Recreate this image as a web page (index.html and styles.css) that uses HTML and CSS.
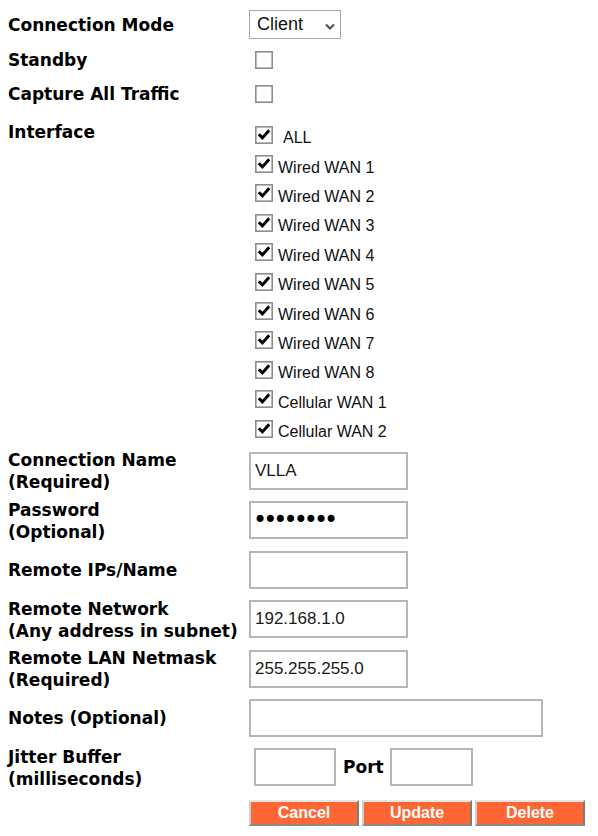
FILE: index.html
```html
<!DOCTYPE html>
<html lang="en">
<head>
<meta charset="utf-8">
<title>Connection Settings</title>
<link rel="stylesheet" href="styles.css">
</head>
<body>
<form class="vpn-form">
  <div class="row r-mode">
    <label class="lbl" for="mode">Connection Mode</label>
    <span class="select-wrap">
      <select id="mode" class="select"><option>Client</option><option>Server</option></select>
      <svg class="chev" viewBox="0 0 10 7" aria-hidden="true"><polyline points="1,1.5 5,5.5 9,1.5" fill="none" stroke="#555" stroke-width="2.2"/></svg>
    </span>
  </div>

  <div class="row r-standby">
    <span class="lbl">Standby</span>
    <span class="ctl-cb"><svg class="cb" viewBox="0 0 18 18"><rect x="0.8" y="0.8" width="16.4" height="16.4" fill="#fff" stroke="#8c8c8c" stroke-width="1.6"/></svg></span>
  </div>

  <div class="row r-capture">
    <span class="lbl">Capture All Traffic</span>
    <span class="ctl-cb"><svg class="cb" viewBox="0 0 18 18"><rect x="0.8" y="0.8" width="16.4" height="16.4" fill="#fff" stroke="#8c8c8c" stroke-width="1.6"/></svg></span>
  </div>

  <div class="row r-iface">
    <span class="lbl">Interface</span>
    <ul class="cb-list">
      <li class="cb-item"><svg class="cb" viewBox="0 0 18 18"><rect x="0.8" y="0.8" width="16.4" height="16.4" fill="#fff" stroke="#8c8c8c" stroke-width="1.6"/><path d="M3.8 8.2 L7.4 11.9 L14.2 4.2" fill="none" stroke="#000" stroke-width="3"/></svg><span class="txt txt-all">ALL</span></li>
      <li class="cb-item"><svg class="cb" viewBox="0 0 18 18"><rect x="0.8" y="0.8" width="16.4" height="16.4" fill="#fff" stroke="#8c8c8c" stroke-width="1.6"/><path d="M3.8 8.2 L7.4 11.9 L14.2 4.2" fill="none" stroke="#000" stroke-width="3"/></svg><span class="txt">Wired WAN 1</span></li>
      <li class="cb-item"><svg class="cb" viewBox="0 0 18 18"><rect x="0.8" y="0.8" width="16.4" height="16.4" fill="#fff" stroke="#8c8c8c" stroke-width="1.6"/><path d="M3.8 8.2 L7.4 11.9 L14.2 4.2" fill="none" stroke="#000" stroke-width="3"/></svg><span class="txt">Wired WAN 2</span></li>
      <li class="cb-item"><svg class="cb" viewBox="0 0 18 18"><rect x="0.8" y="0.8" width="16.4" height="16.4" fill="#fff" stroke="#8c8c8c" stroke-width="1.6"/><path d="M3.8 8.2 L7.4 11.9 L14.2 4.2" fill="none" stroke="#000" stroke-width="3"/></svg><span class="txt">Wired WAN 3</span></li>
      <li class="cb-item"><svg class="cb" viewBox="0 0 18 18"><rect x="0.8" y="0.8" width="16.4" height="16.4" fill="#fff" stroke="#8c8c8c" stroke-width="1.6"/><path d="M3.8 8.2 L7.4 11.9 L14.2 4.2" fill="none" stroke="#000" stroke-width="3"/></svg><span class="txt">Wired WAN 4</span></li>
      <li class="cb-item"><svg class="cb" viewBox="0 0 18 18"><rect x="0.8" y="0.8" width="16.4" height="16.4" fill="#fff" stroke="#8c8c8c" stroke-width="1.6"/><path d="M3.8 8.2 L7.4 11.9 L14.2 4.2" fill="none" stroke="#000" stroke-width="3"/></svg><span class="txt">Wired WAN 5</span></li>
      <li class="cb-item"><svg class="cb" viewBox="0 0 18 18"><rect x="0.8" y="0.8" width="16.4" height="16.4" fill="#fff" stroke="#8c8c8c" stroke-width="1.6"/><path d="M3.8 8.2 L7.4 11.9 L14.2 4.2" fill="none" stroke="#000" stroke-width="3"/></svg><span class="txt">Wired WAN 6</span></li>
      <li class="cb-item"><svg class="cb" viewBox="0 0 18 18"><rect x="0.8" y="0.8" width="16.4" height="16.4" fill="#fff" stroke="#8c8c8c" stroke-width="1.6"/><path d="M3.8 8.2 L7.4 11.9 L14.2 4.2" fill="none" stroke="#000" stroke-width="3"/></svg><span class="txt">Wired WAN 7</span></li>
      <li class="cb-item"><svg class="cb" viewBox="0 0 18 18"><rect x="0.8" y="0.8" width="16.4" height="16.4" fill="#fff" stroke="#8c8c8c" stroke-width="1.6"/><path d="M3.8 8.2 L7.4 11.9 L14.2 4.2" fill="none" stroke="#000" stroke-width="3"/></svg><span class="txt">Wired WAN 8</span></li>
      <li class="cb-item"><svg class="cb" viewBox="0 0 18 18"><rect x="0.8" y="0.8" width="16.4" height="16.4" fill="#fff" stroke="#8c8c8c" stroke-width="1.6"/><path d="M3.8 8.2 L7.4 11.9 L14.2 4.2" fill="none" stroke="#000" stroke-width="3"/></svg><span class="txt">Cellular WAN 1</span></li>
      <li class="cb-item"><svg class="cb" viewBox="0 0 18 18"><rect x="0.8" y="0.8" width="16.4" height="16.4" fill="#fff" stroke="#8c8c8c" stroke-width="1.6"/><path d="M3.8 8.2 L7.4 11.9 L14.2 4.2" fill="none" stroke="#000" stroke-width="3"/></svg><span class="txt">Cellular WAN 2</span></li>
    </ul>
  </div>

  <div class="fields">
    <div class="row r-field">
      <label class="lbl" for="cname">Connection Name<br>(Required)</label>
      <input id="cname" class="inp" type="text" value="VLLA">
    </div>
    <div class="row r-field">
      <label class="lbl" for="pwd">Password<br>(Optional)</label>
      <input id="pwd" class="inp inp-pwd" type="password" value="secret12">
    </div>
    <div class="row r-field">
      <label class="lbl" for="rips">Remote IPs/Name</label>
      <input id="rips" class="inp" type="text" value="">
    </div>
    <div class="row r-field">
      <label class="lbl" for="rnet">Remote Network<br>(Any address in subnet)</label>
      <input id="rnet" class="inp" type="text" value="192.168.1.0">
    </div>
    <div class="row r-field">
      <label class="lbl" for="rmask">Remote LAN Netmask<br>(Required)</label>
      <input id="rmask" class="inp" type="text" value="255.255.255.0">
    </div>
    <div class="row r-field">
      <label class="lbl" for="notes">Notes (Optional)</label>
      <input id="notes" class="inp inp-wide" type="text" value="">
    </div>
    <div class="row r-field">
      <label class="lbl" for="jitter">Jitter Buffer<br>(milliseconds)</label>
      <input id="jitter" class="inp inp-small" type="text" value="">
      <label class="port" for="port">Port</label>
      <input id="port" class="inp inp-port" type="text" value="">
    </div>
  </div>

  <div class="actions">
    <button type="button" class="btn">Cancel</button>
    <button type="button" class="btn">Update</button>
    <button type="button" class="btn">Delete</button>
  </div>
</form>
</body>
</html>
```

FILE: styles.css
```css
html, body {
  margin: 0;
  background: #fff;
}

body {
  font-family: "DejaVu Sans", Verdana, sans-serif;
  color: #000;
}

.vpn-form {
  padding: 7px 0 0 8px;
  width: 590px;
  box-sizing: border-box;
}

.row {
  display: flex;
  align-items: center;
}

.lbl {
  flex: none;
  width: 241px;
  font-weight: bold;
  font-size: 17px;
  line-height: 22px;
}

/* top rows */
.r-mode { height: 34px; }
.r-standby { height: 37px; }
.r-capture { height: 32px; }

.r-mode .lbl {
  padding-top: 2px;
}

.select-wrap {
  position: relative;
  display: inline-block;
  height: 29px;
}

.select {
  appearance: none;
  -webkit-appearance: none;
  width: 92px;
  height: 29px;
  box-sizing: border-box;
  border: 1px solid #a8a8a8;
  border-radius: 0;
  background: #fff;
  padding: 0 0 0 7px;
  margin: 0;
  font-family: "Liberation Sans", Arial, sans-serif;
  font-size: 18px;
  color: #111;
}

.chev {
  position: absolute;
  right: 6px;
  top: 13px;
  width: 10px;
  height: 7px;
  pointer-events: none;
}

.ctl-cb {
  display: flex;
  padding-left: 6px;
}

.cb {
  flex: none;
  width: 18px;
  height: 18px;
  display: block;
}

/* interface list */
.r-iface {
  align-items: flex-start;
  margin-top: 10px;
}

.r-iface .lbl {
  padding-top: 1px;
}

.cb-list {
  list-style: none;
  margin: 0;
  padding: 0 0 0 6px;
}

.cb-item {
  display: flex;
  align-items: center;
  height: 29.4px;
  font-family: "Liberation Sans", Arial, sans-serif;
  font-size: 16px;
  color: #111;
}

.cb-item .txt {
  padding-top: 7px;
  margin-left: 5px;
  line-height: 18px;
}

.cb-item .txt-all {
  margin-left: 10px;
}

/* text fields */
.fields {
  margin-top: 3px;
}

.r-field {
  height: 49.4px;
}

.r-field .lbl {
  padding-top: 1px;
}

.inp {
  flex: none;
  width: 159px;
  height: 38px;
  box-sizing: border-box;
  margin: 0;
  border: 2px solid #b6b6b6;
  border-radius: 0;
  padding: 0 4px;
  background: #fff;
  font-family: "Liberation Sans", Arial, sans-serif;
  font-size: 17px;
  color: #1a1a1a;
  outline: none;
}

.inp-pwd {
  font-family: "DejaVu Sans", sans-serif;
  font-size: 24px;
  letter-spacing: -4px;
  padding-left: 2px;
  color: #000;
}

.inp-wide {
  width: 294px;
}

.inp-small {
  width: 82px;
  margin-left: 5px;
}

.inp-port {
  width: 83px;
}

.port {
  font-weight: bold;
  font-size: 17px;
  margin: 0 6px 0 7px;
}

/* action buttons */
.actions {
  display: flex;
  gap: 3px;
  margin: 8px 0 0 241px;
}

.btn {
  width: 110px;
  height: 26px;
  box-sizing: border-box;
  margin: 0;
  padding: 0;
  background: #ff6633;
  color: #fff;
  font-family: "Liberation Sans", Arial, sans-serif;
  font-weight: bold;
  font-size: 16px;
  border: 2px solid;
  border-color: #e6e6e6 #7c7c7c #8a8a8a #cfcfcf;
  border-radius: 0;
}
```
